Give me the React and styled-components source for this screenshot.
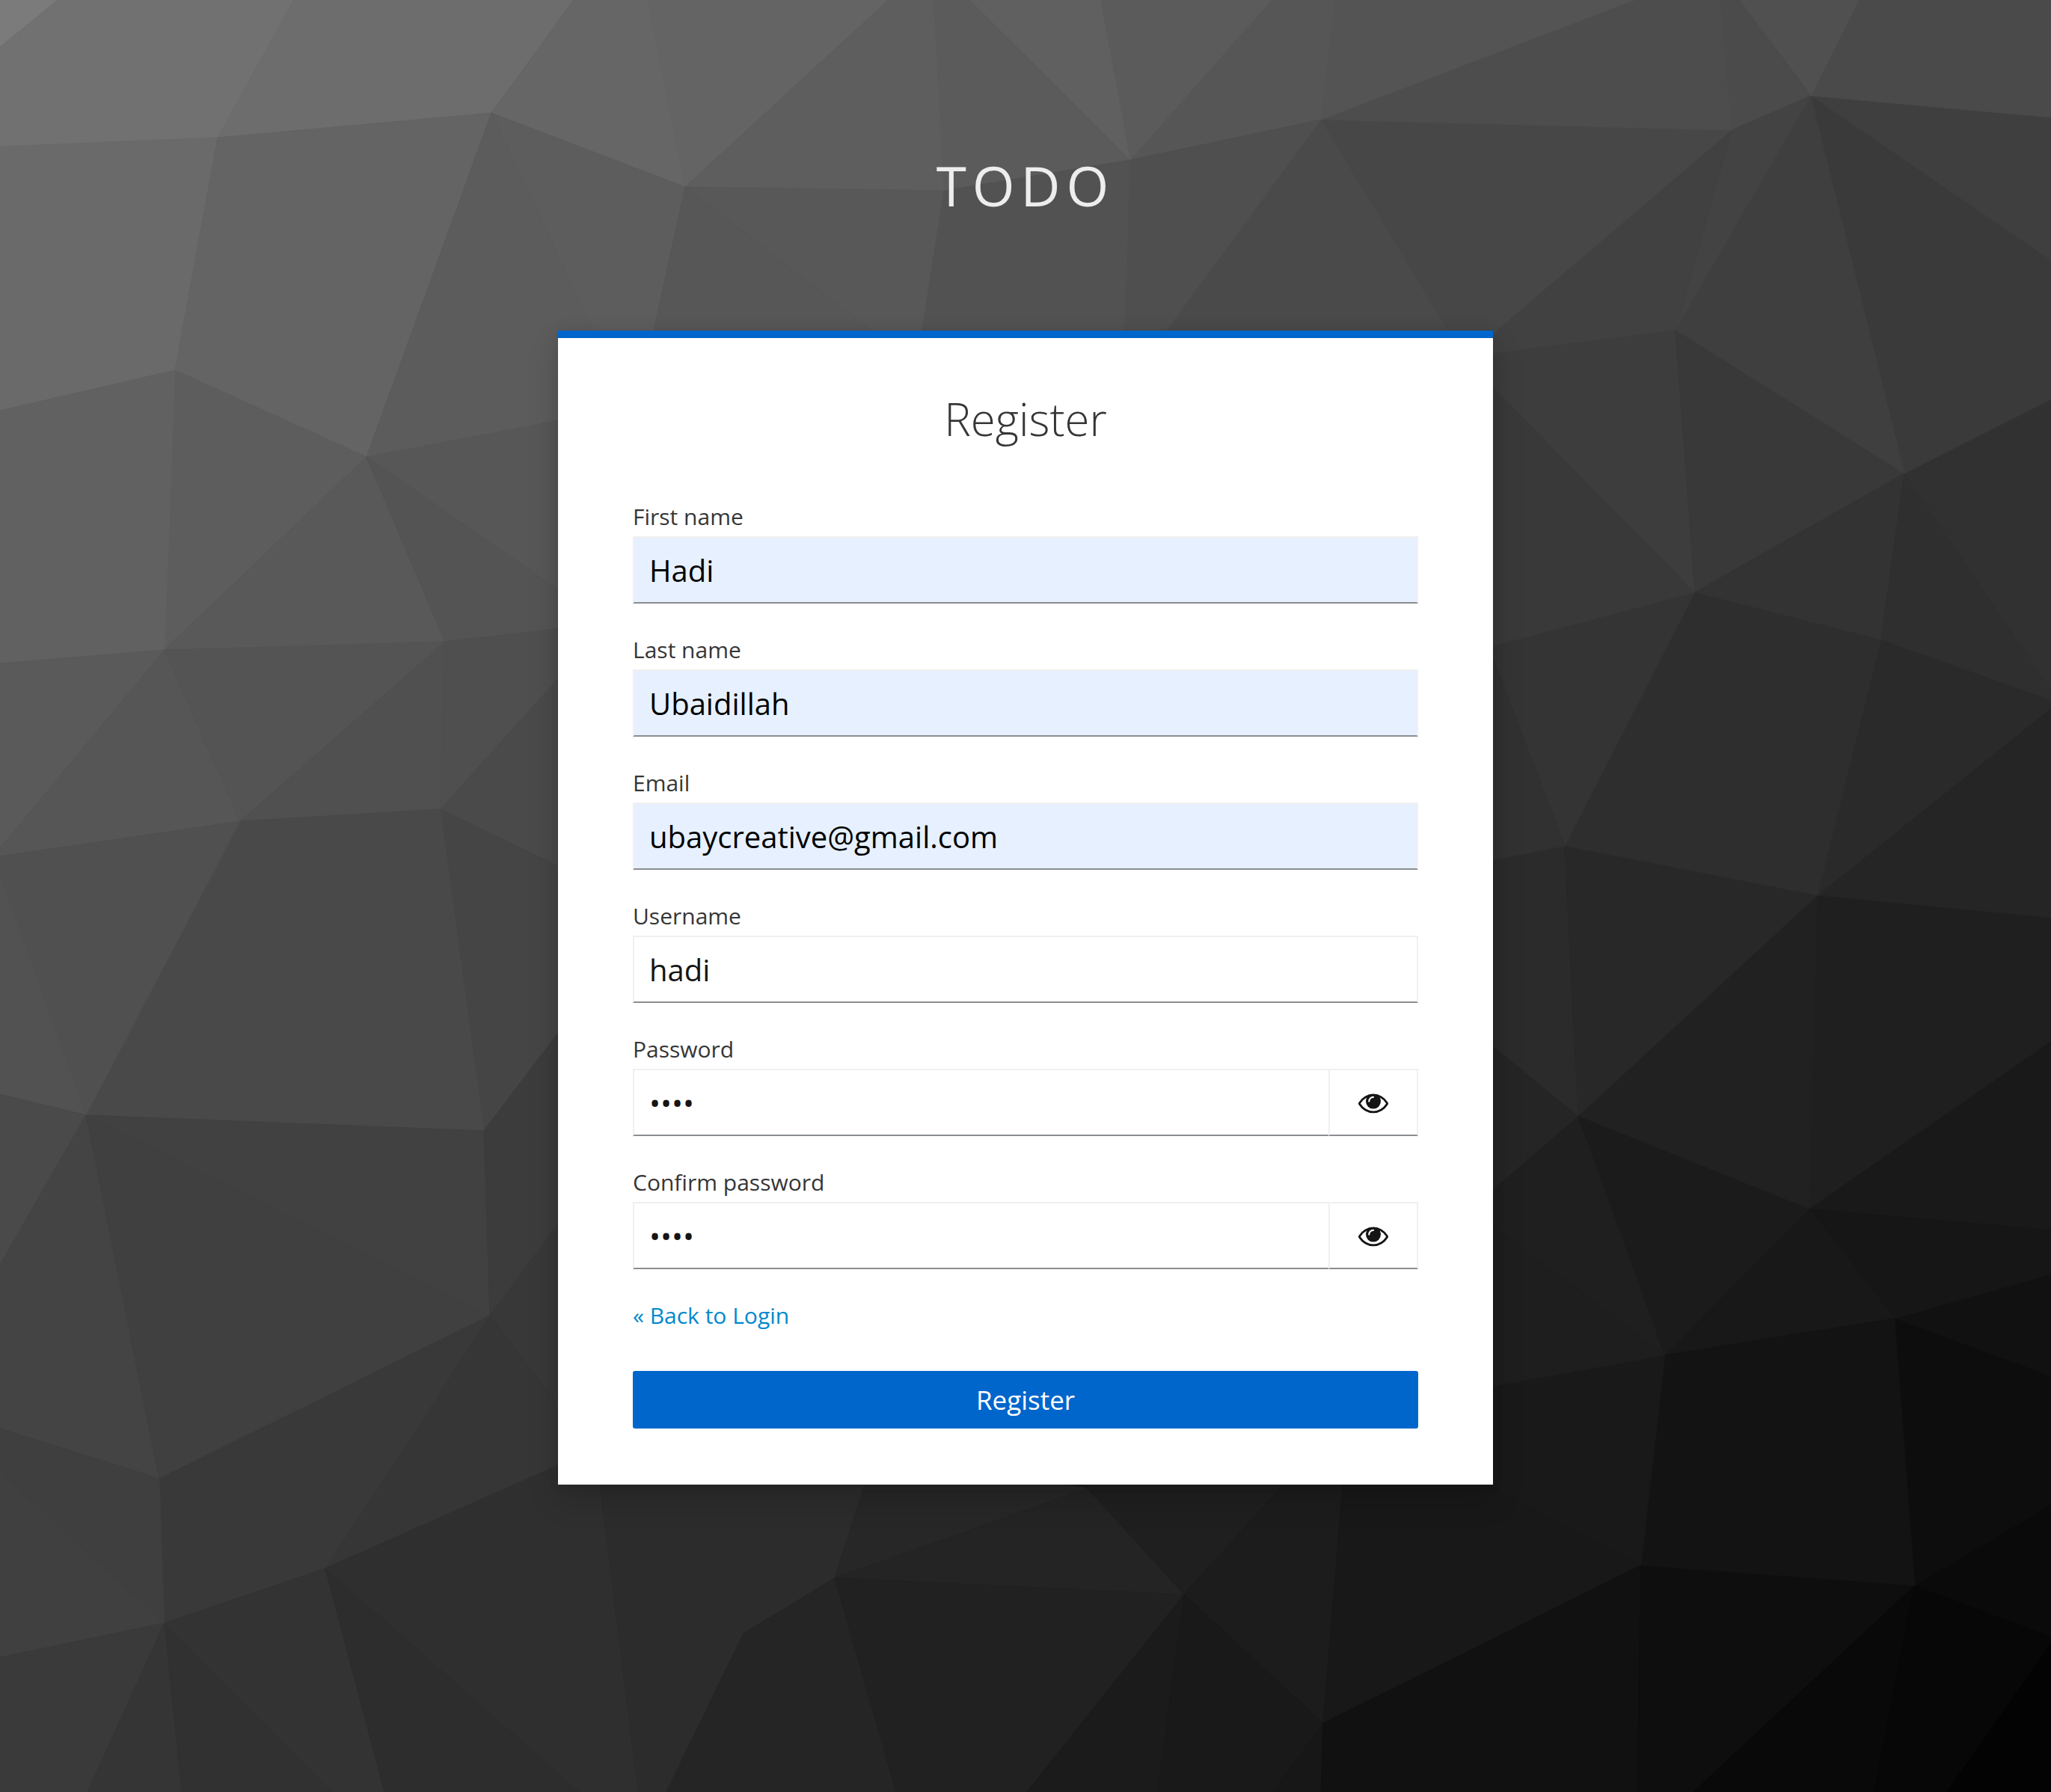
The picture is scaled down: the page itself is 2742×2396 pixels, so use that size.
import React, { useId, useState } from "react";
import styled, { createGlobalStyle } from "styled-components";

const GlobalStyle = createGlobalStyle`
  *, *::before, *::after {
    box-sizing: border-box;
  }
  body {
    margin: 0;
    background: #1d1d1d;
    font-family: "Open Sans", "Noto Sans", sans-serif;
  }
`;

/* Shared mesh points of the low-poly backdrop. */
const P = {
  A: "291,184", B: "657,151", C: "916,250", D: "234,495", E: "490,611",
  F: "220,869", G: "595,858", H: "1262,255", I: "1511,214", J: "1766,160",
  K: "2315,174", L: "2421,128", M: "2546,633", N: "2240,441", O: "2266,792",
  Q: "2515,855", S: "2092,1131", T: "2430,1197", U: "2110,1492",
  V: "2419,1616", W: "2226,1812", X: "2533,1763", Y: "2560,2120",
  Z: "2194,2093", a: "1769,2304", b: "1116,2110", c: "1454,1990",
  d: "1583,2132", e: "994,2184", f: "115,1491", g: "213,1977",
  h: "655,1759", i: "220,2170", j: "435,2097", k: "647,1512",
  l: "321,1098", m: "589,1082",
};

const FACES = [
  ["#7b7b7b", "0,0 77,0 0,63"],
  ["#717171", "77,0 393,0 A 0,196 0,63"],
  ["#6d6d6d", "393,0 767,0 B A"],
  ["#6a6a6a", "0,196 A D 0,549"],
  ["#646464", "A B E D"],
  ["#666666", "B 767,0 866,0 C"],
  ["#646464", "866,0 1188,0 C"],
  ["#5d5d5d", "B C 874,442 870,470 806,470"],
  ["#5c5c5c", "B 806,470 806,551 E"],
  ["#5d5d5d", "D E F"],
  ["#616161", "0,549 D F 0,887"],
  ["#595959", "F E G"],
  ["#575757", "E 806,551 806,830"],
  ["#545454", "E 806,830 806,834 G"],
  ["#5a5a5a", "0,887 F 0,1134"],
  ["#565656", "F l 0,1145 0,1134"],
  ["#545454", "F G l"],
  ["#505050", "G m l"],
  ["#4f4f4f", "G 806,834 806,841 m"],
  ["#4a4a4a", "m 806,841 806,1187"],
  ["#454545", "m 806,1187 806,1302 k"],
  ["#494949", "l m k f"],
  ["#505050", "0,1145 l f 0,1170"],
  ["#525252", "0,1170 f 0,1463"],
  ["#4a4a4a", "0,1463 f 0,1691"],
  ["#444444", "0,1691 f g 0,1910"],
  ["#404040", "f h g"],
  ["#414141", "f k h"],
  ["#3c3c3c", "k 806,1302 806,1566 h"],
  ["#383838", "h 746,1636 746,1880"],
  ["#363636", "h 746,1880 746,1961 j"],
  ["#393939", "g h j i"],
  ["#3f3f3f", "0,1910 g i 0,1968"],
  ["#404040", "0,1968 i 0,2216"],
  ["#3a3a3a", "0,2216 i 117,2396 0,2396"],
  ["#353535", "i 117,2396 243,2396"],
  ["#313131", "i 243,2396 446,2396"],
  ["#333333", "i j 514,2396 446,2396"],
  ["#2d2d2d", "j 514,2396 775,2396"],
  ["#2f2f2f", "j 775,2396 853,2396 796,1937"],
  ["#2c2c2c", "796,1937 1165,1957 b e 891,2396 853,2396"],
  ["#252525", "b e 891,2396 1198,2396"],
  ["#272727", "b 1170,1940 c"],
  ["#242424", "b c d"],
  ["#212121", "b d 1373,2396 1198,2396"],
  ["#1b1b1b", "d 1373,2396 1548,2396"],
  ["#1f1f1f", "c 1451,1950 1747,1950 d"],
  ["#1c1c1c", "d 1747,1950 1798,1950 a"],
  ["#191919", "d a 1702,2396 1548,2396"],
  ["#171717", "a 1702,2396 1766,2396"],
  ["#181818", "a 1798,1950 1960,1970 Z"],
  ["#111111", "a Z 2189,2396 1766,2396"],
  ["#0e0e0e", "Z 2189,2396 2264,2396 Y"],
  ["#090909", "Y 2264,2396 2506,2396"],
  ["#070707", "Y 2506,2396 2603,2396 2742,2198 2742,2188"],
  ["#030303", "2603,2396 2742,2198 2742,2396"],
  ["#0a0a0a", "Y 2742,2012 2742,2188"],
  ["#0d0d0d", "X Y 2742,2012 2742,1840"],
  ["#111111", "X 2742,1840 2742,1704"],
  ["#161616", "V X 2742,1704 2742,1644"],
  ["#181818", "W V X"],
  ["#131313", "W X Y Z"],
  ["#191919", "W 1960,1860 1960,1970 Z"],
  ["#1e1e1e", "W 1960,1860 1960,1612"],
  ["#1f1f1f", "W 1960,1612 U"],
  ["#1b1b1b", "U W V"],
  ["#191919", "V 2742,1392 2742,1644"],
  ["#1f1f1f", "T V 2742,1392 2742,1227"],
  ["#212121", "U T V"],
  ["#252525", "U 1960,1369 1960,1621"],
  ["#2b2b2b", "S U 1960,1369 1960,1157"],
  ["#282828", "S T U"],
  ["#252525", "T 2742,947 2742,1227"],
  ["#2a2a2a", "Q T 2742,947 2742,936"],
  ["#2e2e2e", "O Q T S"],
  ["#343434", "O S 1996,880 1960,870"],
  ["#313131", "S 1996,880 1960,1157"],
  ["#393939", "O 1960,481 1960,873"],
  ["#3d3d3d", "N O 1960,481 1960,477"],
  ["#393939", "N M O"],
  ["#333333", "M O Q"],
  ["#2f2f2f", "M Q 2742,936 2742,922"],
  ["#313131", "M 2742,922 2742,534"],
  ["#3a3a3a", "L M 2742,534 2742,348"],
  ["#3f3f3f", "L 2742,348 2742,157"],
  ["#3f3f3f", "L N M"],
  ["#4a4a4a", "L 2485,0 2742,0 2742,157"],
  ["#505050", "2325,0 2485,0 L"],
  ["#4b4b4b", "2300,0 2325,0 L K"],
  ["#434343", "K L N"],
  ["#414141", "K N 1960,477 2003,440"],
  ["#474747", "J K 2003,440 1990,460 1946,460"],
  ["#4a4a4a", "J 1546,460 1946,460"],
  ["#4d4d4d", "J K 2300,0 2185,0"],
  ["#545454", "J 2185,0 1785,0"],
  ["#565656", "J 1785,0 1700,0 I"],
  ["#4f4f4f", "I J 1546,460 1503,460"],
  ["#5b5b5b", "I 1471,0 1700,0"],
  ["#606060", "I 1296,0 1471,0"],
  ["#5b5b5b", "1248,0 1296,0 I H"],
  ["#5e5e5e", "C 1188,0 1248,0 H"],
  ["#585858", "C H 1230,460 1188,460"],
  ["#575757", "C 1188,460 870,460"],
  ["#525252", "H I 1503,460 1230,460"],
];

const facePoints = (face) =>
  face.split(" ").map((point) => P[point] || point).join(" ");

const Page = styled.div`
  position: relative;
  isolation: isolate;
  min-height: 100vh;
  padding: 0 40px;
`;

const BackdropArt = styled.svg`
  position: absolute;
  inset: 0;
  z-index: -1;
  width: 100%;
  height: 100%;
`;

const Header = styled.header`
  padding: 198px 0 144px;
  text-align: center;
`;

const Brand = styled.div`
  color: #ededed;
  font-size: 73px;
  line-height: 100px;
  letter-spacing: 8px;
  text-transform: uppercase;
`;

const Card = styled.main`
  width: 100%;
  max-width: 1250px;
  margin: 0 auto;
  padding: 69px 100px 75px;
  border-top: 10px solid #0066cc;
  background: #ffffff;
  box-shadow: 0 20px 40px rgba(3, 3, 3, 0.16), 0 0 15px rgba(3, 3, 3, 0.08);
`;

const Title = styled.h1`
  margin: 0 0 69px;
  color: #363636;
  font-size: 60px;
  font-weight: 300;
  line-height: 78px;
  text-align: center;
`;

const Form = styled.form`
  display: flex;
  flex-direction: column;
  gap: 39px;
`;

const FieldGroup = styled.div`
  display: flex;
  flex-direction: column;
  gap: 4px;
`;

const Label = styled.label`
  color: #363636;
  font-size: 30px;
  line-height: 45px;
`;

const InputRow = styled.div`
  display: flex;
`;

const Input = styled.input`
  flex: 1;
  min-width: 0;
  height: 90px;
  margin: 0;
  padding: 0 20px;
  border: 2px solid #f0f0f0;
  border-bottom-color: #8a8d90;
  border-right-width: ${(p) => (p.$joined ? "0" : "2px")};
  border-radius: 0;
  outline: 0;
  background: ${(p) => (p.$filled ? "#e6f0ff" : "#ffffff")};
  color: ${(p) => (p.$filled ? "#000000" : "#151515")};
  font-family: inherit;
  font-size: 40px;
`;

const ToggleButton = styled.button`
  display: flex;
  align-items: center;
  justify-content: center;
  width: 120px;
  height: 90px;
  padding: 0;
  border: 2px solid #f0f0f0;
  border-bottom-color: #8a8d90;
  background: #ffffff;
  color: #151515;
  cursor: pointer;
`;

const EyeSvg = styled.svg`
  width: 40px;
  height: 40px;
  fill: currentColor;
`;

const BackLink = styled.a`
  color: #0088ce;
  font-size: 30px;
  line-height: 45px;
  text-decoration: none;
`;

const Actions = styled.div`
  display: flex;
  flex-direction: column;
  align-items: flex-start;
  gap: 52px;
`;

const SubmitButton = styled.button`
  width: 100%;
  height: 77px;
  padding: 0;
  border: 0;
  border-radius: 3px;
  background: #0066cc;
  color: #ffffff;
  font-family: inherit;
  font-size: 35px;
  cursor: pointer;
`;

function Backdrop() {
  return (
    <BackdropArt
      viewBox="0 0 2742 2396"
      preserveAspectRatio="xMidYMid slice"
      aria-hidden="true"
    >
      {FACES.map(([color, face]) => (
        <polygon
          key={face}
          points={facePoints(face)}
          fill={color}
          stroke={color}
          strokeWidth="1"
          strokeLinejoin="round"
        />
      ))}
    </BackdropArt>
  );
}

function EyeIcon() {
  return (
    <EyeSvg viewBox="0 0 1792 1792" aria-hidden="true">
      <path d="M1664 960q-152-236-381-353 61 104 61 225 0 185-131.5 316.5t-316.5 131.5-316.5-131.5-131.5-316.5q0-121 61-225-229 117-381 353 133 205 333.5 326.5t434.5 121.5 434.5-121.5 333.5-326.5zm-720-384q0-20-14-34t-34-14q-125 0-214.5 89.5t-89.5 214.5q0 20 14 34t34 14 34-14 14-34q0-86 61-147t147-61q20 0 34-14t14-34zm848 384q0 34-20 69-140 230-376.5 368.5t-499.5 138.5-499.5-139-376.5-368q-20-35-20-69t20-69q140-229 376.5-368t499.5-139 499.5 139 376.5 368q20 35 20 69z" />
    </EyeSvg>
  );
}

function TextField({ label, filled, ...inputProps }) {
  const id = useId();
  return (
    <FieldGroup>
      <Label htmlFor={id}>{label}</Label>
      <InputRow>
        <Input id={id} $filled={filled} {...inputProps} />
      </InputRow>
    </FieldGroup>
  );
}

function PasswordField({ label, ...inputProps }) {
  const id = useId();
  const [visible, setVisible] = useState(false);
  return (
    <FieldGroup>
      <Label htmlFor={id}>{label}</Label>
      <InputRow>
        <Input
          id={id}
          $joined
          type={visible ? "text" : "password"}
          autoComplete="new-password"
          {...inputProps}
        />
        <ToggleButton
          type="button"
          aria-label={visible ? "Hide password" : "Show password"}
          aria-controls={id}
          onClick={() => setVisible(!visible)}
        >
          <EyeIcon />
        </ToggleButton>
      </InputRow>
    </FieldGroup>
  );
}

export default function App() {
  return (
    <>
      <GlobalStyle />
      <Page>
        <Backdrop />
        <Header>
          <Brand>Todo</Brand>
        </Header>
        <Card>
          <Title>Register</Title>
          <Form onSubmit={(event) => event.preventDefault()}>
            <TextField label="First name" name="firstName" type="text" defaultValue="Hadi" filled />
            <TextField label="Last name" name="lastName" type="text" defaultValue="Ubaidillah" filled />
            <TextField label="Email" name="email" type="text" defaultValue="ubaycreative@gmail.com" filled />
            <TextField label="Username" name="username" type="text" defaultValue="hadi" />
            <PasswordField label="Password" name="password" defaultValue="hadi" />
            <PasswordField label="Confirm password" name="passwordConfirm" defaultValue="hadi" />
            <Actions>
              <BackLink href="#login">« Back to Login</BackLink>
              <SubmitButton type="submit">Register</SubmitButton>
            </Actions>
          </Form>
        </Card>
      </Page>
    </>
  );
}
